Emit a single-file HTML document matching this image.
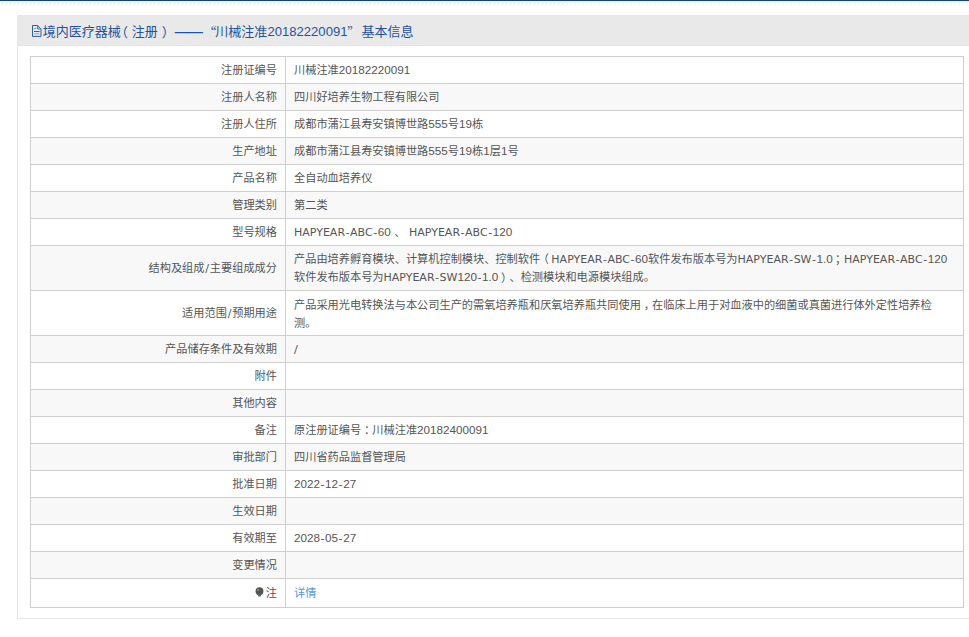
<!DOCTYPE html>
<html lang="zh-CN">
<head>
<meta charset="utf-8">
<title>境内医疗器械（注册）</title>
<style>
html,body{margin:0;padding:0;}
body{width:969px;height:637px;overflow:hidden;background:#fff;position:relative;
  font-family:"DejaVu Sans","Noto Sans CJK SC",sans-serif;font-size:11.2px;color:#555;text-spacing-trim:space-all;}
.topline{position:absolute;left:0;top:0;width:969px;height:1px;background:#18437f;}
.topglow{position:absolute;left:0;top:1px;width:969px;height:2px;background:linear-gradient(#d9f1fb,#f4fbfe);}
.hatch{position:absolute;left:0;top:3px;width:969px;height:2px;
  background:repeating-linear-gradient(135deg,#fff 0,#fff 1.9px,#e6e6e6 1.9px,#e6e6e6 2.83px);opacity:.75;}
.panel{position:absolute;left:17px;top:15px;width:1000px;height:603px;border:1px solid #e7e7e7;border-top:none;box-sizing:content-box;}
.phead{position:absolute;left:0;top:0;width:1000px;height:30px;background:#e9e9e9;border-bottom:1px solid #e5e5e7;}
.ptitle{position:absolute;left:0;top:0;height:31px;line-height:33px;font-size:13px;color:#1f52a0;white-space:nowrap;}
.ptitle span{position:absolute;top:0;}
.ico{position:absolute;left:14px;top:10px;}
.s2,.s4,.s6,.s9{font-family:"Noto Sans CJK SC",sans-serif;}
.s6,.s9{opacity:.85;}
.s1{left:24.8px}.s2{left:97px}.s3{left:113.8px}.s4{left:143.7px}.s5{left:155.9px;font-size:15.9px;letter-spacing:-2.1px;top:-0.5px}.s6{left:185.2px}
.s7{left:197.3px}.s8{left:249.4px;font-family:"Liberation Sans",sans-serif;font-size:13.1px}.s9{left:329.3px}.s10{left:343.6px}
.tbl{position:absolute;left:12px;top:41px;width:932px;border:1px solid #cfcfcf;border-top:none;border-bottom:1px solid #cfcfcf;}
.r{display:flex;border-top:1px solid #cfcfcf;height:26px;}
.r.g{background:#f8f8f8;}
.r.t{height:44px;}
.r.l{height:28px;}
.k{width:255px;box-sizing:border-box;border-right:1px solid #cfcfcf;padding:5px 8px 0;text-align:right;flex:none;line-height:18px;white-space:nowrap;}
.r.t .k{padding-top:14px;}
.r.l .k{padding-top:6px;}
.v{flex:1;padding:5px 12px 0 8px;line-height:18px;white-space:nowrap;}
.r.l .v{padding-top:6px;}
.bulb{vertical-align:-0.5px;margin-right:2px;}
.r.t .v{padding-top:6px;}
.r.t.g .v{padding-top:5px;}
a{color:#5596e0;text-decoration:none;}
.h{margin:0 .5px;}
.sl{margin:0 .8px;}
.pl{position:relative;left:-2.4px;}
.pr{position:relative;left:2.2px;}
.pc{position:relative;left:2.9px;}
.pm{position:relative;left:3px;}
.pq{position:relative;left:2.8px;top:.5px;}
.e{font-size:11px;line-height:0;}
.n{font-family:"Liberation Sans",sans-serif;font-size:11.7px;line-height:0;}
</style>
</head>
<body>
<div class="topline"></div><div class="topglow"></div><div class="hatch"></div>
<div class="panel">
  <div class="phead"></div>
  <div class="ptitle"><svg class="ico" width="10" height="12" viewBox="0 0 10 12"><path d="M0.5 0.5H5.6L9 3.9V11.4H0.5Z" fill="none" stroke="#2c5fa8" stroke-width="1"/><path d="M5.6 0.8V3.9H8.8" fill="none" stroke="#3f6db0" stroke-width="1"/><path d="M2 3.5H4.2" stroke="#7f9bc8" stroke-width="1" fill="none"/><path d="M2 6.5H7.5" stroke="#2c5fa8" stroke-width="1" fill="none"/><path d="M2 8.7H7.5" stroke="#a3b3d0" stroke-width="1.3" fill="none"/></svg><span class="s1">境内医疗器械</span><span class="s2">（</span><span class="s3">注册</span><span class="s4">）</span><span class="s5">——</span><span class="s6">“</span><span class="s7">川械注准</span><span class="s8">20182220091</span><span class="s9">”</span><span class="s10">基本信息</span></div>
  <div class="tbl">
    <div class="r"><div class="k">注册证编号</div><div class="v">川械注准<span class="n">20182220091</span></div></div>
    <div class="r g"><div class="k">注册人名称</div><div class="v">四川好培养生物工程有限公司</div></div>
    <div class="r"><div class="k">注册人住所</div><div class="v">成都市蒲江县寿安镇博世路<span class="n">555</span>号<span class="n">19</span>栋</div></div>
    <div class="r g"><div class="k">生产地址</div><div class="v">成都市蒲江县寿安镇博世路<span class="n">555</span>号<span class="n">19</span>栋<span class="n">1</span>层<span class="n">1</span>号</div></div>
    <div class="r"><div class="k">产品名称</div><div class="v">全自动血培养仪</div></div>
    <div class="r g"><div class="k">管理类别</div><div class="v">第二类</div></div>
    <div class="r"><div class="k">型号规格</div><div class="v"><span class="e">HAPYEAR</span><span class="h">-</span><span class="e">ABC</span><span class="h">-</span><span class="n">60</span> 、 <span class="e">HAPYEAR</span><span class="h">-</span><span class="e">ABC</span><span class="h">-</span><span class="n">120</span></div></div>
    <div class="r g t"><div class="k">结构及组成<span class="sl">/</span>主要组成成分</div><div class="v">产品由培养孵育模块、计算机控制模块、控制软件<span class="pl">（</span><span class="e">HAPYEAR</span><span class="h">-</span><span class="e">ABC</span><span class="h">-</span><span class="n">60</span>软件发布版本号为<span class="e">HAPYEAR</span><span class="h">-</span><span class="e">SW</span><span class="h">-</span><span class="n">1.0</span><span class="pr">；</span><span class="e">HAPYEAR</span><span class="h">-</span><span class="e">ABC</span><span class="h">-</span><span class="n">120</span><br>软件发布版本号为<span class="e">HAPYEAR</span><span class="h">-</span><span class="e">SW</span><span class="n">120</span><span class="h">-</span><span class="n">1.0</span><span class="pq">）</span>、检测模块和电源模块组成。</div></div>
    <div class="r t"><div class="k">适用范围<span class="sl">/</span>预期用途</div><div class="v">产品采用光电转换法与本公司生产的需氧培养瓶和厌氧培养瓶共同使用<span class="pm">，</span>在临床上用于对血液中的细菌或真菌进行体外定性培养检<br>测。</div></div>
    <div class="r g"><div class="k">产品储存条件及有效期</div><div class="v">/</div></div>
    <div class="r"><div class="k">附件</div><div class="v"></div></div>
    <div class="r g"><div class="k">其他内容</div><div class="v"></div></div>
    <div class="r"><div class="k">备注</div><div class="v">原注册证编号<span class="pc">：</span>川械注准<span class="n">20182400091</span></div></div>
    <div class="r g"><div class="k">审批部门</div><div class="v">四川省药品监督管理局</div></div>
    <div class="r"><div class="k">批准日期</div><div class="v"><span class="n">2022</span><span class="h">-</span><span class="n">12</span><span class="h">-</span><span class="n">27</span></div></div>
    <div class="r g"><div class="k">生效日期</div><div class="v"></div></div>
    <div class="r"><div class="k">有效期至</div><div class="v"><span class="n">2028</span><span class="h">-</span><span class="n">05</span><span class="h">-</span><span class="n">27</span></div></div>
    <div class="r g"><div class="k">变更情况</div><div class="v"></div></div>
    <div class="r l"><div class="k"><svg class="bulb" width="9" height="11" viewBox="0 0 9 11"><circle cx="4.5" cy="4.2" r="3.9" fill="#555"/><path d="M2.9 7.6h3.2v1.6h-3.2z" fill="#666"/><path d="M3.4 9.4h2.2v0.9h-2.2z" fill="#aaa"/><circle cx="3" cy="2.9" r="1.1" fill="#8a8a8a"/></svg>注</div><div class="v"><a>详情</a></div></div>
  </div>
</div>
</body>
</html>
